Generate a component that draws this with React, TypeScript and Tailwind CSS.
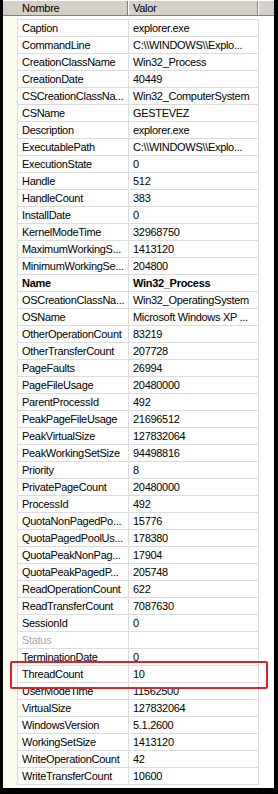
import React from "react";

const rows: [string, string, ("bold" | "gray")?][] = [
  ["Caption", "explorer.exe"],
  ["CommandLine", "C:\\\\WINDOWS\\\\Explo..."],
  ["CreationClassName", "Win32_Process"],
  ["CreationDate", "40449"],
  ["CSCreationClassNa...", "Win32_ComputerSystem"],
  ["CSName", "GESTEVEZ"],
  ["Description", "explorer.exe"],
  ["ExecutablePath", "C:\\\\WINDOWS\\\\Explo..."],
  ["ExecutionState", "0"],
  ["Handle", "512"],
  ["HandleCount", "383"],
  ["InstallDate", "0"],
  ["KernelModeTime", "32968750"],
  ["MaximumWorkingS...", "1413120"],
  ["MinimumWorkingSe...", "204800"],
  ["Name", "Win32_Process", "bold"],
  ["OSCreationClassNa...", "Win32_OperatingSystem"],
  ["OSName", "Microsoft Windows XP ..."],
  ["OtherOperationCount", "83219"],
  ["OtherTransferCount", "207728"],
  ["PageFaults", "26994"],
  ["PageFileUsage", "20480000"],
  ["ParentProcessId", "492"],
  ["PeakPageFileUsage", "21696512"],
  ["PeakVirtualSize", "127832064"],
  ["PeakWorkingSetSize", "94498816"],
  ["Priority", "8"],
  ["PrivatePageCount", "20480000"],
  ["ProcessId", "492"],
  ["QuotaNonPagedPo...", "15776"],
  ["QuotaPagedPoolUs...", "178380"],
  ["QuotaPeakNonPag...", "17904"],
  ["QuotaPeakPagedP...", "205748"],
  ["ReadOperationCount", "622"],
  ["ReadTransferCount", "7087630"],
  ["SessionId", "0"],
  ["Status", "", "gray"],
  ["TerminationDate", "0"],
  ["ThreadCount", "10"],
  ["UserModeTime", "11562500"],
  ["VirtualSize", "127832064"],
  ["WindowsVersion", "5.1.2600"],
  ["WorkingSetSize", "1413120"],
  ["WriteOperationCount", "42"],
  ["WriteTransferCount", "10600"],
];

export default function App() {
  return (
    <div
      className="w-[278px] h-[794px] bg-black pl-[3px] pr-[4px] pb-[6px] text-[11px] tracking-[-0.3px] text-black"
      style={{ fontFamily: '"Liberation Sans", Arial, sans-serif' }}
    >
      <div className="relative flex h-full flex-col bg-white">
        {/* header */}
        <div className="flex h-[16px] shrink-0 bg-[#d4d0c8] border-b border-[#808080] border-t border-t-white">
          <div className="flex w-[125px] items-center border-r border-[#808080] pl-[19px] leading-[14px]">
            Nombre
          </div>
          <div className="flex w-[130px] items-center border-l border-white border-r border-r-[#808080] pl-[4px] leading-[14px]">
            Valor
          </div>
          <div className="flex-1 border-l border-white" />
        </div>
        {/* body */}
        <div className="flex flex-1">
          <div className="w-[14px] shrink-0 bg-[#fcfbef]" />
          <div className="flex-1 pt-[3px]">
            <div className="w-[242px] border-t border-l border-[#dcdcdc]">
              {rows.map(([name, value, kind]) => (
                <div
                  key={name}
                  className={`flex h-[17px] border-b border-[#dcdcdc] leading-[16px] ${
                    kind === "bold" ? "font-bold" : ""
                  } ${kind === "gray" ? "text-[#a8a8a8]" : ""}`}
                >
                  <div className="w-[111px] shrink-0 overflow-hidden whitespace-nowrap border-r border-[#dcdcdc] pl-[4px]">
                    {name}
                  </div>
                  <div className="flex-1 overflow-hidden whitespace-nowrap border-r border-[#dcdcdc] pl-[4px]">
                    {value}
                  </div>
                </div>
              ))}
            </div>
          </div>
        </div>
        {/* highlight annotation */}
        <div className="absolute left-[7px] top-[661px] h-[28px] w-[258px] rounded-[2px] border-2 border-[#d3252b]" />
      </div>
    </div>
  );
}
